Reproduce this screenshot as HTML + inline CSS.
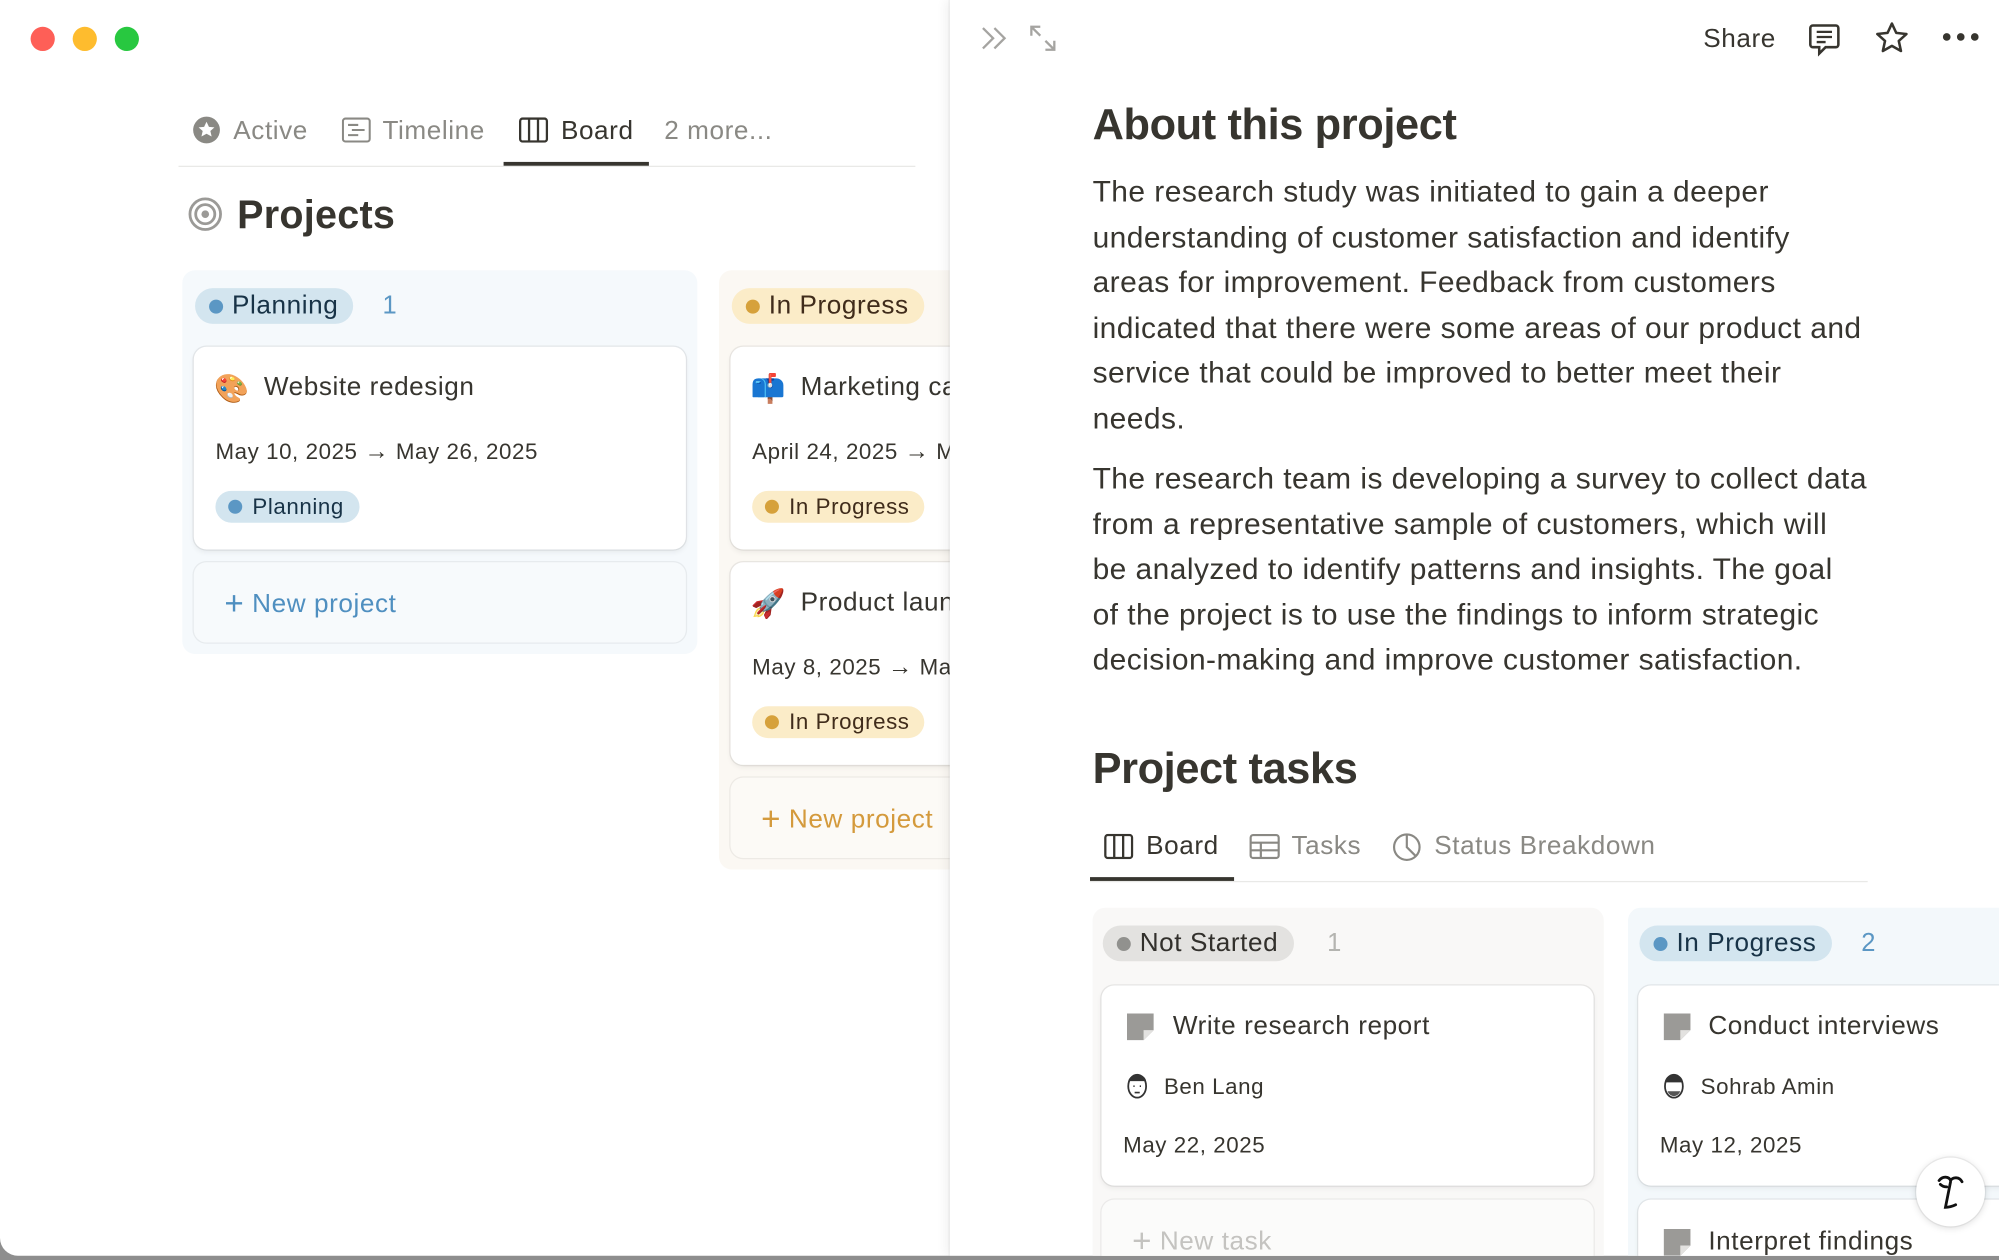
<!DOCTYPE html>
<html><head><meta charset="utf-8"><style>
html,body{margin:0;padding:0;width:1999px;height:1259px;overflow:hidden;background:#8e8e8e}
#w{position:absolute;left:0;top:0;width:1568px;height:988px;transform:scale(1.27487);transform-origin:0 0;font-family:"Liberation Sans",sans-serif;color:#37352f;letter-spacing:.45px}
#win{position:absolute;left:0;top:0;width:1568px;height:985px;background:#fff;border-radius:0 0 0 14px;overflow:hidden}
.a{position:absolute;white-space:nowrap}
.dot{position:absolute;width:19px;height:19px;border-radius:50%}
.t{font-size:20.5px;line-height:24px;color:#8a8984}
.col{position:absolute;border-radius:10px}
.card{position:absolute;background:#fff;border-radius:10px;box-shadow:0 0 0 1px rgba(15,15,15,.07),0 2px 4px rgba(15,15,15,.06)}
.pill{position:absolute;height:28px;border-radius:14px;font-size:20.5px;line-height:28px;padding:0 12px 0 29px;box-sizing:border-box}
.pill i{position:absolute;left:11px;top:9px;width:11px;height:11px;border-radius:50%}
.spill{position:absolute;height:25px;border-radius:13px;font-size:17.5px;line-height:25px;padding:0 12px 0 29px;box-sizing:border-box}
.spill i{position:absolute;left:10px;top:7px;width:11px;height:11px;border-radius:50%}
.ct{font-size:20.5px;line-height:24px;color:#37352f}
.d{font-size:17.5px;line-height:20px;color:#37352f}
.p{font-size:23.5px;line-height:35.5px;color:#37352f;letter-spacing:.35px}
.ar{font-size:19px}
</style></head><body><div id="w"><div id="win">
<div class="dot" style="left:24px;top:21px;background:#fe5f57"></div>
<div class="dot" style="left:57px;top:21px;background:#febc2e"></div>
<div class="dot" style="left:90px;top:21px;background:#28c840"></div>

<svg class="a" style="left:151px;top:91px" width="22" height="22" viewBox="0 0 22 22"><circle cx="11" cy="11" r="10.5" fill="#8a8984"/><path d="M11 4.5l1.9 4 4.3.4-3.2 2.9 1 4.3L11 13.9 7 16.1l1-4.3-3.2-2.9 4.3-.4z" fill="#fff"/></svg>
<div class="a t" style="left:183px;top:91px">Active</div>
<svg class="a" style="left:268px;top:92px" width="23" height="20" viewBox="0 0 23 20"><rect x="1" y="1" width="21" height="18" rx="2" fill="none" stroke="#8a8984" stroke-width="1.6"/><path d="M5 6h8M8 10h10M5 14h8" stroke="#8a8984" stroke-width="1.6"/></svg>
<div class="a t" style="left:300px;top:91px">Timeline</div>
<svg class="a" style="left:407px;top:92px" width="23" height="20" viewBox="0 0 23 20"><rect x="1" y="1" width="21" height="18" rx="2" fill="none" stroke="#37352f" stroke-width="1.8"/><path d="M8 1v18M15 1v18" stroke="#37352f" stroke-width="1.8"/></svg>
<div class="a t" style="left:440px;top:91px;color:#37352f">Board</div>
<div class="a t" style="left:521px;top:91px">2 more...</div>
<div class="a" style="left:140px;top:130px;width:578px;height:1px;background:#e9e9e7"></div>
<div class="a" style="left:395px;top:127px;width:114px;height:3px;background:#37352f"></div>

<svg class="a" style="left:147px;top:154px" width="28" height="28" viewBox="0 0 28 28"><circle cx="14" cy="14" r="12" fill="none" stroke="#9b9a97" stroke-width="2.2"/><circle cx="14" cy="14" r="7.5" fill="none" stroke="#9b9a97" stroke-width="2.2"/><circle cx="14" cy="14" r="3" fill="#9b9a97"/></svg>
<div class="a" style="left:186px;top:150px;font-size:31px;line-height:38px;font-weight:bold;color:#37352f;letter-spacing:.2px">Projects</div>

<div class="col" style="left:143px;top:212px;width:404px;height:301px;background:#f5f9fc"></div>
<div class="pill" style="left:153px;top:226px;background:#d3e5ef;color:#183347"><i style="background:#5b97c4"></i>Planning</div>
<div class="a" style="left:300px;top:229px;font-size:20px;color:#5b97c4">1</div>
<div class="card" style="left:152px;top:272px;width:386px;height:159px"></div>
<div class="a" style="left:168px;top:292px;font-size:22px">🎨</div>
<div class="a ct" style="left:207px;top:292px">Website redesign</div>
<div class="a d" style="left:169px;top:344px">May 10, 2025 <span class="ar">→</span> May 26, 2025</div>
<div class="spill" style="left:169px;top:385px;background:#d3e5ef;color:#183347"><i style="background:#5b97c4"></i>Planning</div>
<div class="card" style="left:152px;top:441px;width:386px;height:63px;background:#f7fafc;box-shadow:0 0 0 1px rgba(15,15,15,.06)"></div>
<div class="a" style="left:176px;top:460px;font-size:20.5px;line-height:26px;color:#4f8fc0"><span style="font-size:26px;vertical-align:-2px">+</span> New project</div>

<div class="col" style="left:564px;top:212px;width:200px;height:470px;background:#fbf8f3"></div>
<div class="pill" style="left:574px;top:226px;background:#fbecc8;color:#402c1b"><i style="background:#d6a13b"></i>In Progress</div>
<div class="card" style="left:573px;top:272px;width:200px;height:159px"></div>
<div class="a" style="left:589px;top:292px;font-size:22px">📫</div>
<div class="a ct" style="left:628px;top:292px">Marketing campaign</div>
<div class="a d" style="left:590px;top:344px">April 24, 2025 <span class="ar">→</span> May</div>
<div class="spill" style="left:590px;top:385px;background:#fbecc8;color:#402c1b"><i style="background:#d6a13b"></i>In Progress</div>
<div class="card" style="left:573px;top:441px;width:200px;height:159px"></div>
<div class="a" style="left:589px;top:461px;font-size:22px">🚀</div>
<div class="a ct" style="left:628px;top:461px">Product launch</div>
<div class="a d" style="left:590px;top:513px">May 8, 2025 <span class="ar">→</span> May</div>
<div class="spill" style="left:590px;top:554px;background:#fbecc8;color:#402c1b"><i style="background:#d6a13b"></i>In Progress</div>
<div class="card" style="left:573px;top:610px;width:200px;height:63px;background:#fcfaf6;box-shadow:0 0 0 1px rgba(15,15,15,.06)"></div>
<div class="a" style="left:597px;top:629px;font-size:20.5px;line-height:26px;color:#d49a3c"><span style="font-size:26px;vertical-align:-2px">+</span> New project</div>

<div class="a" style="left:745px;top:0;width:823px;height:985px;background:#fff;box-shadow:-3px 0 8px rgba(0,0,0,.06),-1px 0 0 rgba(0,0,0,.05)">
<svg class="a" style="left:24px;top:20px" width="22" height="20" viewBox="0 0 22 20"><path d="M2 2l8 8-8 8M11 2l8 8-8 8" fill="none" stroke="#a5a4a1" stroke-width="1.8"/></svg>
<svg class="a" style="left:62px;top:19px" width="22" height="22" viewBox="0 0 22 22"><path d="M2 9V2h7M2 2l7 7M20 13v7h-7M20 20l-7-7" fill="none" stroke="#a5a4a1" stroke-width="1.8"/></svg>
<div class="a" style="left:591px;top:19px;font-size:20.5px;line-height:24px;color:#37352f">Share</div>
<svg class="a" style="left:672px;top:17px" width="28" height="28" viewBox="0 0 28 28"><path d="M5 3h18a2 2 0 0 1 2 2v13a2 2 0 0 1-2 2h-8l-5 5v-5H5a2 2 0 0 1-2-2V5a2 2 0 0 1 2-2z" fill="none" stroke="#37352f" stroke-width="2"/><path d="M8 8h12M8 12h12M8 16h7" stroke="#37352f" stroke-width="1.8"/></svg>
<svg class="a" style="left:725px;top:16px" width="28" height="28" viewBox="0 0 28 28"><path d="M14 2.5l3.4 7.3 8 .9-6 5.4 1.7 7.9L14 20l-7.1 4 1.7-7.9-6-5.4 8-.9z" fill="none" stroke="#37352f" stroke-width="2" stroke-linejoin="round"/></svg>
<svg class="a" style="left:778px;top:24px" width="30" height="10" viewBox="0 0 30 10"><circle cx="4" cy="5" r="3" fill="#37352f"/><circle cx="15" cy="5" r="3" fill="#37352f"/><circle cx="26" cy="5" r="3" fill="#37352f"/></svg>

<div class="a" style="left:112px;top:77px;font-size:34px;line-height:42px;font-weight:bold;color:#37352f;letter-spacing:-.3px">About this project</div>
<div class="a p" style="left:112px;top:133px;white-space:normal;width:660px">The research study was initiated to gain a deeper<br>understanding of customer satisfaction and identify<br>areas for improvement. Feedback from customers<br>indicated that there were some areas of our product and<br>service that could be improved to better meet their<br>needs.</div>
<div class="a p" style="left:112px;top:358px;white-space:normal;width:660px">The research team is developing a survey to collect data<br>from a representative sample of customers, which will<br>be analyzed to identify patterns and insights. The goal<br>of the project is to use the findings to inform strategic<br>decision-making and improve customer satisfaction.</div>
<div class="a" style="left:112px;top:582px;font-size:34px;line-height:42px;font-weight:bold;color:#37352f;letter-spacing:-.3px">Project tasks</div>

<svg class="a" style="left:121px;top:654px" width="23" height="20" viewBox="0 0 23 20"><rect x="1" y="1" width="21" height="18" rx="2" fill="none" stroke="#37352f" stroke-width="1.8"/><path d="M8 1v18M15 1v18" stroke="#37352f" stroke-width="1.8"/></svg>
<div class="a t" style="left:154px;top:652px;color:#37352f">Board</div>
<svg class="a" style="left:235px;top:654px" width="24" height="20" viewBox="0 0 24 20"><rect x="1" y="1" width="22" height="18" rx="2" fill="none" stroke="#8a8984" stroke-width="1.7"/><path d="M1 7h22M1 13h22M9 7v12" stroke="#8a8984" stroke-width="1.7"/></svg>
<div class="a t" style="left:268px;top:652px">Tasks</div>
<svg class="a" style="left:347px;top:653px" width="23" height="23" viewBox="0 0 23 23"><circle cx="11.5" cy="11.5" r="10" fill="none" stroke="#8a8984" stroke-width="1.7"/><path d="M11.5 1.5v10l7 7" fill="none" stroke="#8a8984" stroke-width="1.7"/></svg>
<div class="a t" style="left:380px;top:652px">Status Breakdown</div>
<div class="a" style="left:110px;top:691px;width:610px;height:1px;background:#e9e9e7"></div>
<div class="a" style="left:110px;top:688px;width:113px;height:3px;background:#37352f"></div>

<div class="col" style="left:112px;top:712px;width:401px;height:290px;background:#f9f8f7"></div>
<div class="pill" style="left:120px;top:726px;background:#e3e2e0;color:#32302c"><i style="background:#91918e"></i>Not Started</div>
<div class="a" style="left:296px;top:729px;font-size:20px;color:#b4b4b0">1</div>
<div class="card" style="left:119px;top:773px;width:386px;height:157px"></div>
<svg class="a" style="left:139px;top:795px" width="21" height="21" viewBox="0 0 21 21"><path d="M0 0h21v13l-8 8H0z" fill="#9b9a97"/><path d="M13 21v-8h8" fill="#e3e2e0"/></svg>
<div class="a ct" style="left:175px;top:793px">Write research report</div>
<svg class="a" style="left:137px;top:839px" width="20" height="24" viewBox="0 0 20 24"><ellipse cx="10" cy="13" rx="7" ry="9" fill="#fff" stroke="#333" stroke-width="1.4"/><path d="M3 9c1-6 13-7 14 0" fill="#333"/><path d="M7 13h1M12 13h1M8 18h4" stroke="#333" stroke-width="1.2"/></svg>
<div class="a d" style="left:168px;top:842px">Ben Lang</div>
<div class="a d" style="left:136px;top:888px">May 22, 2025</div>
<div class="card" style="left:119px;top:941px;width:386px;height:63px;background:#fbfbfa;box-shadow:0 0 0 1px rgba(15,15,15,.06)"></div>
<div class="a" style="left:143px;top:960px;font-size:20.5px;line-height:26px;color:#c4c3c0"><span style="font-size:26px;vertical-align:-2px">+</span> New task</div>

<div class="col" style="left:532px;top:712px;width:300px;height:290px;background:#f3f8fb"></div>
<div class="pill" style="left:541px;top:726px;background:#d3e5ef;color:#183347"><i style="background:#5b97c4"></i>In Progress</div>
<div class="a" style="left:715px;top:729px;font-size:20px;color:#5b97c4">2</div>
<div class="card" style="left:540px;top:773px;width:300px;height:157px"></div>
<svg class="a" style="left:560px;top:795px" width="21" height="21" viewBox="0 0 21 21"><path d="M0 0h21v13l-8 8H0z" fill="#9b9a97"/><path d="M13 21v-8h8" fill="#e3e2e0"/></svg>
<div class="a ct" style="left:595px;top:793px">Conduct interviews</div>
<svg class="a" style="left:558px;top:839px" width="20" height="24" viewBox="0 0 20 24"><ellipse cx="10" cy="13" rx="7" ry="9" fill="#fff" stroke="#333" stroke-width="1.4"/><path d="M3 10c0-8 14-8 14 0" fill="#333"/><path d="M5 17c2 5 8 5 10 0" fill="#555"/></svg>
<div class="a d" style="left:589px;top:842px">Sohrab Amin</div>
<div class="a d" style="left:557px;top:888px">May 12, 2025</div>
<div class="card" style="left:540px;top:941px;width:300px;height:63px"></div>
<svg class="a" style="left:560px;top:964px" width="21" height="21" viewBox="0 0 21 21"><path d="M0 0h21v13l-8 8H0z" fill="#9b9a97"/><path d="M13 21v-8h8" fill="#e3e2e0"/></svg>
<div class="a ct" style="left:595px;top:962px">Interpret findings</div>

<div class="a" style="left:758px;top:908px;width:54px;height:54px;border-radius:50%;background:#fff;box-shadow:0 1px 6px rgba(0,0,0,.15),0 0 0 1px rgba(0,0,0,.05)"></div>
<svg class="a" style="left:770px;top:918px" width="30" height="34" viewBox="0 0 30 34"><path d="M6 8c3-4 8-3 9 0M15 8c2-3 7-3 9 1M15 9l-4 20c3 0 6-1 8-2M12 13c-2 0-4-1-5-2" fill="none" stroke="#111" stroke-width="2.2" stroke-linecap="round"/></svg>
</div>
</div></div></body></html>
